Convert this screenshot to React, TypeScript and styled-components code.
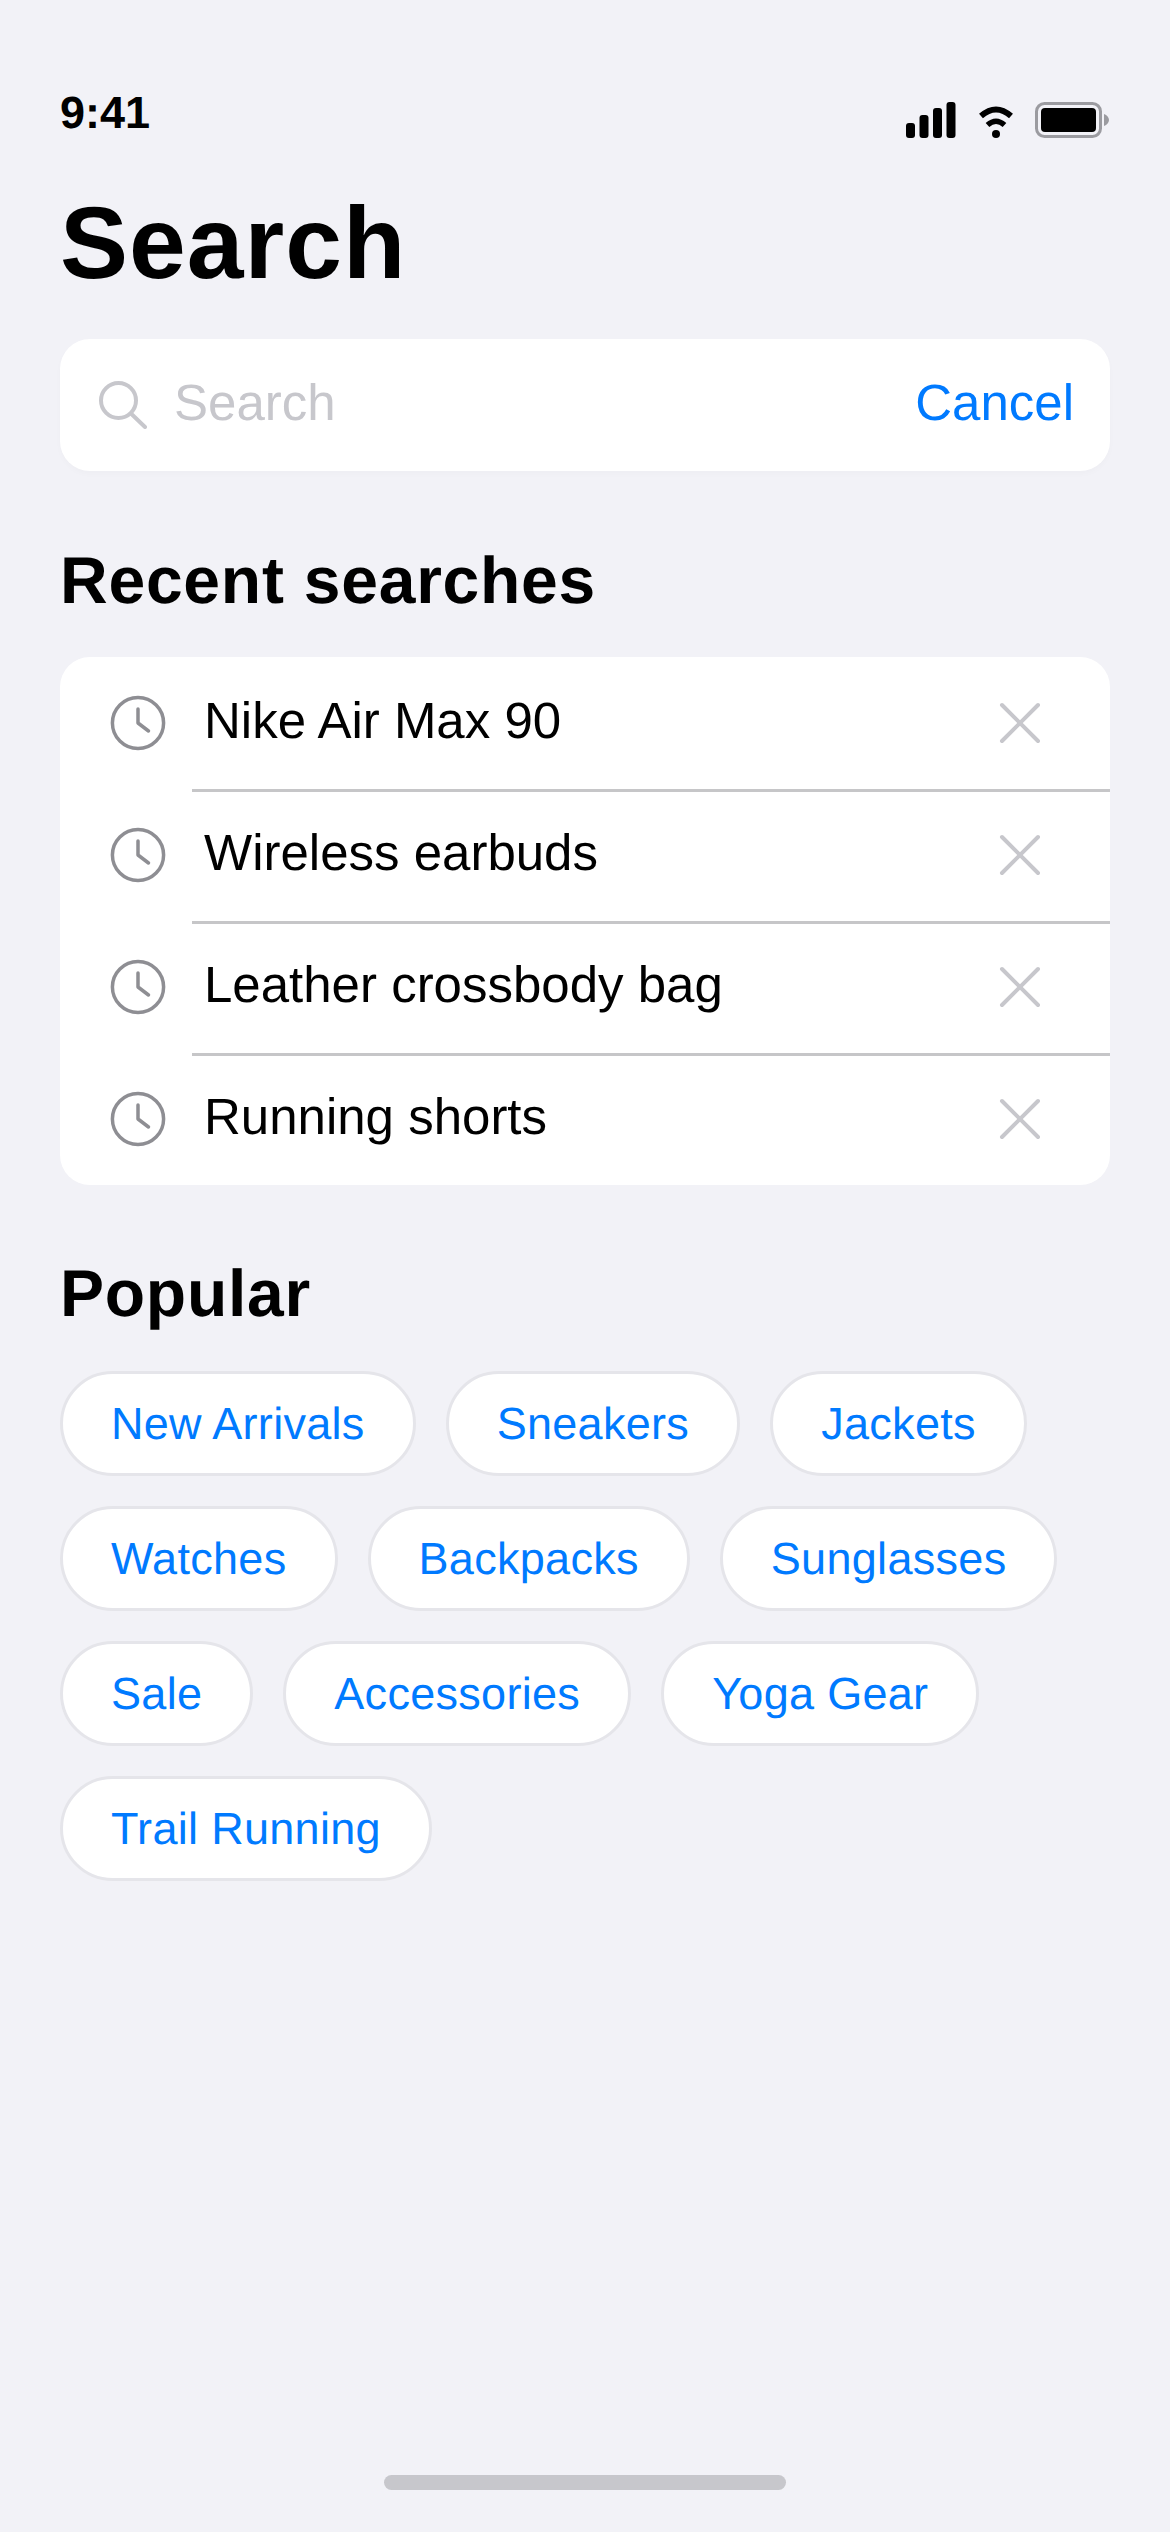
import React from "react";
import styled, { createGlobalStyle } from "styled-components";

const Global = createGlobalStyle`
  html, body { margin: 0; padding: 0; background: #f2f2f7; }
  body { font-family: "Liberation Sans", Arial, sans-serif; color: #000; text-rendering: geometricPrecision; }
`;

const Screen = styled.div`
  width: 1170px;
  height: 2532px;
  box-sizing: border-box;
  padding: 0 60px;
  background: #f2f2f7;
  display: flex;
  flex-direction: column;
  overflow: hidden;
`;

const StatusBar = styled.div`
  height: 102px;
  margin-top: 62px;
  display: flex;
  justify-content: space-between;
  align-items: flex-start;
`;

const Time = styled.span`
  font-size: 45px;
  font-weight: 700;
  line-height: 102px;
`;

const StatusIcons = styled.div`
  display: flex;
  align-items: flex-start;
  margin-top: 40px;
`;

const Title = styled.h1`
  margin: 19px 0 0;
  font-size: 102px;
  font-weight: 700;
  line-height: 120px;
  letter-spacing: 0.01em;
`;

const SearchBar = styled.div`
  margin-top: 36px;
  height: 132px;
  box-sizing: border-box;
  background: #fff;
  border-radius: 30px;
  box-shadow: 0 3px 6px rgba(0, 0, 0, 0.02);
  display: flex;
  align-items: center;
  padding: 0 36px 0 39px;
  flex-shrink: 0;
`;

const SearchIcon = styled.svg`
  flex-shrink: 0;
`;

const Placeholder = styled.span`
  font-size: 51px;
  color: #c7c7cc;
  margin: 0 0 6px 27px;
  flex: 1;
`;

const Cancel = styled.span`
  font-size: 51px;
  color: #007aff;
  margin-bottom: 6px;
`;

const SectionTitle = styled.h2<{ $top: number }>`
  margin: ${(p) => p.$top}px 0 0;
  font-size: 66px;
  font-weight: 700;
  line-height: 78px;
  letter-spacing: 0.76px;
`;

const List = styled.div`
  margin-top: 38px;
  background: #fff;
  border-radius: 30px;
  overflow: hidden;
  flex-shrink: 0;
`;

const Row = styled.div`
  height: 132px;
  display: flex;
  align-items: center;
  padding: 0 66px 0 48px;
  position: relative;
`;

const RowIcon = styled.svg`
  width: 60px;
  height: 60px;
  flex-shrink: 0;
`;

const Separator = styled.div`
  position: absolute;
  left: 132px;
  right: 0;
  bottom: -3px;
  height: 3px;
  background: #c6c6c8;
  z-index: 1;
`;

const RowLabel = styled.span`
  flex: 1;
  margin: 0 0 6px 36px;
  font-size: 51px;
  color: #000;
`;

const Chips = styled.div`
  margin-top: 39px;
  display: flex;
  flex-wrap: wrap;
  gap: 30px;
`;

const Chip = styled.div`
  height: 105px;
  box-sizing: border-box;
  padding: 0 48px;
  background: #fff;
  border: 3px solid #e5e5ea;
  border-radius: 53px;
  display: flex;
  align-items: center;
  font-size: 45px;
  letter-spacing: 0.3px;
  color: #007aff;
`;

const HomeIndicator = styled.div`
  position: absolute;
  left: 384px;
  top: 2475px;
  width: 402px;
  height: 15px;
  border-radius: 8px;
  background: #c7c7cc;
`;

const Clock = () => (
  <RowIcon viewBox="0 0 60 60" fill="none" stroke="#8e8e93" strokeWidth="3.5" strokeLinecap="round" strokeLinejoin="round">
    <circle cx="30" cy="30" r="25.6" />
    <path d="M30 16 V30 L40.5 38" />
  </RowIcon>
);

const Close = () => (
  <svg width="48" height="48" viewBox="0 0 48 48" fill="none" stroke="#c7c7cc" strokeWidth="4" strokeLinecap="round">
    <path d="M6 6 L42 42 M42 6 L6 42" />
  </svg>
);

const recent = ["Nike Air Max 90", "Wireless earbuds", "Leather crossbody bag", "Running shorts"];
const popular = [
  "New Arrivals", "Sneakers", "Jackets", "Watches", "Backpacks",
  "Sunglasses", "Sale", "Accessories", "Yoga Gear", "Trail Running",
];

export default function App() {
  return (
    <Screen>
      <Global />
      <StatusBar>
        <Time>9:41</Time>
        <StatusIcons>
          <svg width="204" height="37" viewBox="0 0 204 37">
            <g fill="#000">
              <rect x="0" y="21" width="9" height="15" rx="3" />
              <rect x="13.5" y="13" width="9" height="23" rx="3" />
              <rect x="27" y="6" width="9" height="30" rx="3" />
              <rect x="40.5" y="0" width="9" height="36" rx="3" />
              <circle cx="90" cy="32" r="4" />
            </g>
            <path d="M75 14 Q90 1 105 14" fill="none" stroke="#000" strokeWidth="6" />
            <path d="M81.5 23 Q90 15.5 98.5 23" fill="none" stroke="#000" strokeWidth="5.5" />
            <rect x="130.5" y="1.5" width="64" height="33" rx="8" fill="none" stroke="#9b9ba0" strokeWidth="3" />
            <rect x="135" y="6" width="55" height="24" rx="4" fill="#000" />
            <path d="M198 12 C201 13 203 15.5 203 18 C203 20.5 201 23 198 24 Z" fill="#9b9ba0" />
          </svg>
        </StatusIcons>
      </StatusBar>
      <Title>Search</Title>
      <SearchBar>
        <SearchIcon width="48" height="48" viewBox="0 0 48 48" fill="none" stroke="#c7c7cc" strokeWidth="4" strokeLinecap="round">
          <circle cx="19.5" cy="19.5" r="17.5" />
          <path d="M33 33.5 L46 46" />
        </SearchIcon>
        <Placeholder>Search</Placeholder>
        <Cancel>Cancel</Cancel>
      </SearchBar>
      <SectionTitle $top={70}>Recent searches</SectionTitle>
      <List>
        {recent.map((r, i) => (
          <Row key={r}>
            <Clock />
            <RowLabel>{r}</RowLabel>
            <Close />
            {i < recent.length - 1 && <Separator />}
          </Row>
        ))}
      </List>
      <SectionTitle $top={69}>Popular</SectionTitle>
      <Chips>
        {popular.map((p) => (
          <Chip key={p}>{p}</Chip>
        ))}
      </Chips>
      <HomeIndicator />
    </Screen>
  );
}
